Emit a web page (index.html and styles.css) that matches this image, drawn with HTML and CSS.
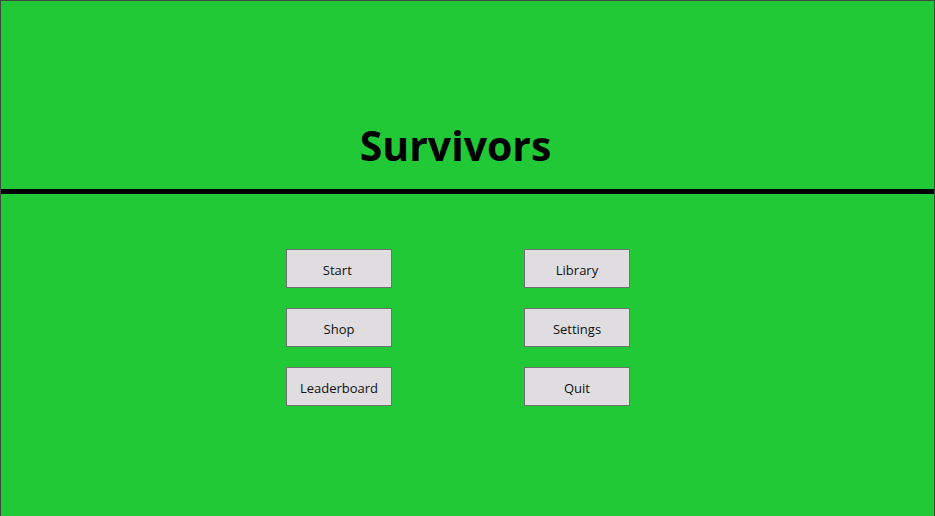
FILE: index.html
```html
<!DOCTYPE html>
<html lang="en">
<head>
<meta charset="utf-8">
<title>Survivors</title>
<link rel="stylesheet" href="styles.css">
</head>
<body>
<header class="banner">
<h1 class="title">Survivors</h1>
</header>
<main class="menu">
<button class="menu-button" type="button">Start </button>
<button class="menu-button" type="button">Library</button>
<button class="menu-button" type="button">Shop</button>
<button class="menu-button" type="button">Settings</button>
<button class="menu-button" type="button">Leaderboard</button>
<button class="menu-button" type="button">Quit</button>
</main>
</body>
</html>
```

FILE: styles.css
```css
* {
  box-sizing: border-box;
}

body {
  margin: 0;
  min-height: 100vh;
  border: 1px solid #3c4a3e;
  border-bottom: 0;
  background: #22c936;
  color: #000;
  font-family: "Open Sans", "Noto Sans", sans-serif;
}

.banner {
  padding: 116px 24px 16px 0;
  border-bottom: 5px solid #000;
  text-align: center;
}

.title {
  margin: 0;
  font-size: 41px;
  font-weight: 700;
  line-height: 56px;
}

.menu {
  display: grid;
  grid-template-columns: 106px 106px;
  grid-auto-rows: 39px;
  justify-content: center;
  gap: 20px 132px;
  padding: 55px 19px 24px 0;
}

.menu-button {
  padding: 2px 4px 0;
  border: 1px solid #707070;
  border-radius: 0;
  background: #dfdddf;
  color: #111;
  font-family: inherit;
  font-size: 13px;
  line-height: 20px;
  white-space: pre;
}
```
